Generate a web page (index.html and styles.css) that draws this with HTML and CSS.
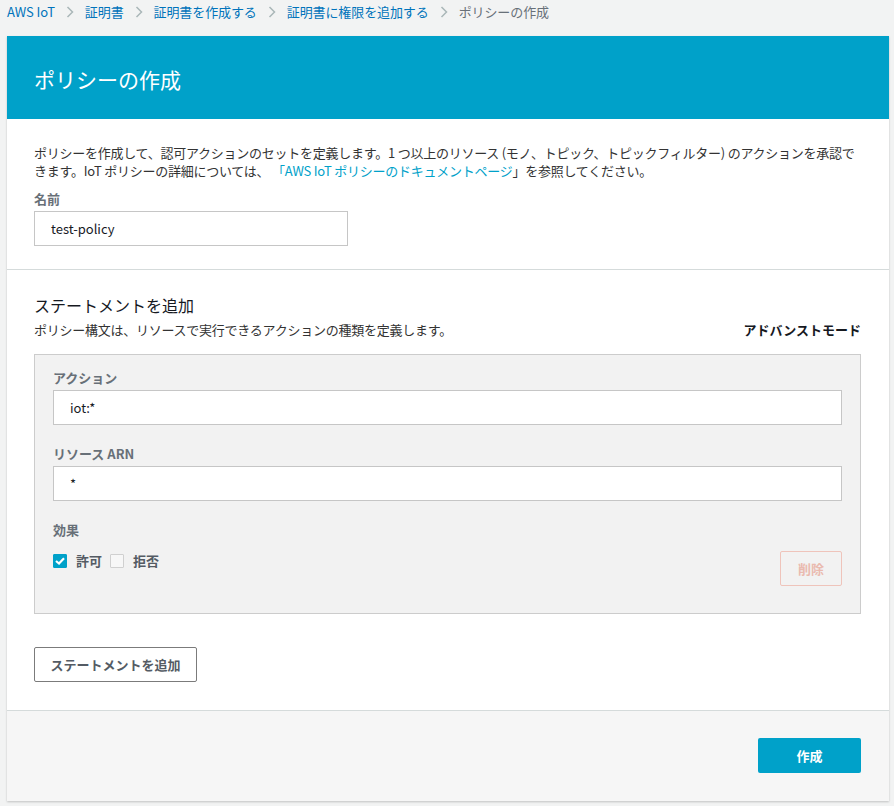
FILE: index.html
```html
<!DOCTYPE html>
<html lang="ja">
<head>
<meta charset="utf-8">
<title>ポリシーの作成</title>
<link rel="stylesheet" href="styles.css">
</head>
<body>
<nav class="crumbs">
  <a class="crumb" href="#">AWS IoT</a>
  <svg class="chev" width="8" height="12" viewBox="0 0 8 12"><polyline points="1.5,1 6.5,6 1.5,11" fill="none" stroke="#aab7b8" stroke-width="1.5"/></svg>
  <a class="crumb" href="#">証明書</a>
  <svg class="chev" width="8" height="12" viewBox="0 0 8 12"><polyline points="1.5,1 6.5,6 1.5,11" fill="none" stroke="#aab7b8" stroke-width="1.5"/></svg>
  <a class="crumb" href="#">証明書を作成する</a>
  <svg class="chev" width="8" height="12" viewBox="0 0 8 12"><polyline points="1.5,1 6.5,6 1.5,11" fill="none" stroke="#aab7b8" stroke-width="1.5"/></svg>
  <a class="crumb" href="#">証明書に権限を追加する</a>
  <svg class="chev" width="8" height="12" viewBox="0 0 8 12"><polyline points="1.5,1 6.5,6 1.5,11" fill="none" stroke="#aab7b8" stroke-width="1.5"/></svg>
  <span class="crumb current">ポリシーの作成</span>
</nav>

<main class="panel">
  <header class="panel-head">
    <h1>ポリシーの作成</h1>
  </header>

  <section class="sec sec-name">
    <p class="desc">ポリシーを作成して、認可アクションのセットを定義します。1 つ以上のリソース (モノ、トピック、トピックフィルター) のアクションを承認できます。IoT ポリシーの詳細については、 <a class="link" href="#">「AWS IoT ポリシーのドキュメントページ</a>」を参照してください。</p>
    <label class="label">名前</label>
    <div class="input name-input">test-policy</div>
  </section>

  <section class="sec sec-stmt">
    <h2>ステートメントを追加</h2>
    <div class="sub-row">
      <p class="desc">ポリシー構文は、リソースで実行できるアクションの種類を定義します。</p>
      <span class="adv">アドバンストモード</span>
    </div>

    <div class="stmt-box">
      <label class="label">アクション</label>
      <div class="input">iot:*</div>
      <label class="label gap">リソース ARN</label>
      <div class="input">*</div>
      <label class="label gap">効果</label>
      <div class="effect-row">
        <div class="checks">
          <span class="cb checked"><svg width="10" height="8" viewBox="0 0 10 8"><polyline points="1,4 4,6.5 9,1.2" fill="none" stroke="#fff" stroke-width="2.2"/></svg></span>
          <span class="cb-label">許可</span>
          <span class="cb"></span>
          <span class="cb-label">拒否</span>
        </div>
        <button class="btn-delete">削除</button>
      </div>
    </div>

    <button class="btn-add">ステートメントを追加</button>
  </section>

  <footer class="panel-foot">
    <button class="btn-create">作成</button>
  </footer>
</main>
</body>
</html>
```

FILE: styles.css
```css
* { box-sizing: border-box; }
html, body { margin: 0; padding: 0; }
body {
  background: #f2f3f3;
  font-family: "Noto Sans CJK JP", "Noto Sans", sans-serif;
  font-size: 13px;
  color: #16191f;
  width: 894px;
  height: 806px;
  overflow: hidden;
}
.crumbs {
  height: 36px;
  display: flex;
  align-items: flex-start;
  padding: 3px 0 0 7px;
  gap: 11px;
  font-size: 13px;
  line-height: 18px;
  letter-spacing: -0.1px;
}
.crumb { color: #0073bb; text-decoration: none; }
.crumb.current { color: #687078; }
.chev { margin-top: 3px; }

.panel {
  margin: 0 5px 0 7px;
  background: #fff;
  box-shadow: 0 1px 2px rgba(0,0,0,0.2);
}
.panel-head {
  height: 83px;
  background: #00a1c9;
  display: flex;
  align-items: center;
  padding-left: 27px;
}
.panel-head h1 {
  margin: 0;
  color: #fff;
  font-weight: 400;
  font-size: 21px;
  line-height: 28px;
  padding-top: 2px;
}
.sec { padding: 0 28px 0 27px; }
.sec-name {
  padding-top: 25px;
  padding-bottom: 23px;
  border-bottom: 1px solid #d5dbdb;
}
.desc {
  margin: 0;
  line-height: 18px;
  color: #333;
  letter-spacing: -0.25px;
}
.link { color: #00a1c9; text-decoration: none; }
.label {
  display: block;
  font-weight: 700;
  color: #687078;
  line-height: 18px;
  margin-top: 10px;
}
.input {
  margin-top: 3px;
  height: 35px;
  border: 1px solid #c6c6c6;
  background: #fff;
  padding: 0 16px;
  display: flex;
  align-items: center;
  color: #16191f;
  line-height: 18px;
}
.name-input { width: 314px; }

.sec-stmt {
  padding-top: 23px;
  padding-bottom: 28px;
  border-bottom: 1px solid #d5dbdb;
}
.sec-stmt h2 {
  margin: 0;
  font-size: 16px;
  font-weight: 400;
  line-height: 24px;
  color: #16191f;
}
.sub-row {
  margin-top: 4px;
  display: flex;
  justify-content: space-between;
  align-items: center;
}
.adv {
  font-weight: 700;
  color: #16191f;
  line-height: 18px;
}
.stmt-box {
  margin-top: 15px;
  background: #f2f2f2;
  border: 1px solid #cccccc;
  padding: 14px 18px 27px 18px;
  height: 260px;
}
.stmt-box .label { margin-top: 0; }
.stmt-box .label.gap { margin-top: 20px; }
.effect-row {
  margin-top: 12px;
  display: flex;
  justify-content: space-between;
  align-items: flex-start;
}
.checks {
  display: flex;
  align-items: center;
  margin-top: 2px;
}
.cb {
  width: 14px;
  height: 14px;
  border: 1px solid #d0d0d0;
  background: #f7f7f7;
  border-radius: 1px;
  display: flex;
  align-items: center;
  justify-content: center;
}
.cb.checked { background: #00a1c9; border-color: #00a1c9; }
.cb-label {
  font-weight: 700;
  color: #545b64;
  margin: 0 8px 0 9px;
  line-height: 16px;
}
.btn-delete {
  width: 62px;
  height: 35px;
  border: 1px solid #efc4bb;
  background: transparent;
  color: #eabaaf;
  font-family: inherit;
  font-size: 13px;
  font-weight: 700;
  border-radius: 2px;
  padding: 0;
}
.btn-add {
  margin-top: 33px;
  width: 163px;
  height: 35px;
  border: 1px solid #7b7b7b;
  background: #fff;
  color: #545b64;
  font-family: inherit;
  font-size: 13px;
  font-weight: 700;
  border-radius: 2px;
  padding: 0;
  display: block;
}
.panel-foot {
  background: #f6f6f6;
  height: 90px;
  display: flex;
  justify-content: flex-end;
  align-items: flex-start;
  padding: 27px 28px 0 0;
}
.btn-create {
  width: 103px;
  height: 35px;
  background: #00a1c9;
  border: none;
  border-radius: 2px;
  color: #fff;
  font-family: inherit;
  font-size: 13px;
  font-weight: 700;
  padding: 0;
}
```
